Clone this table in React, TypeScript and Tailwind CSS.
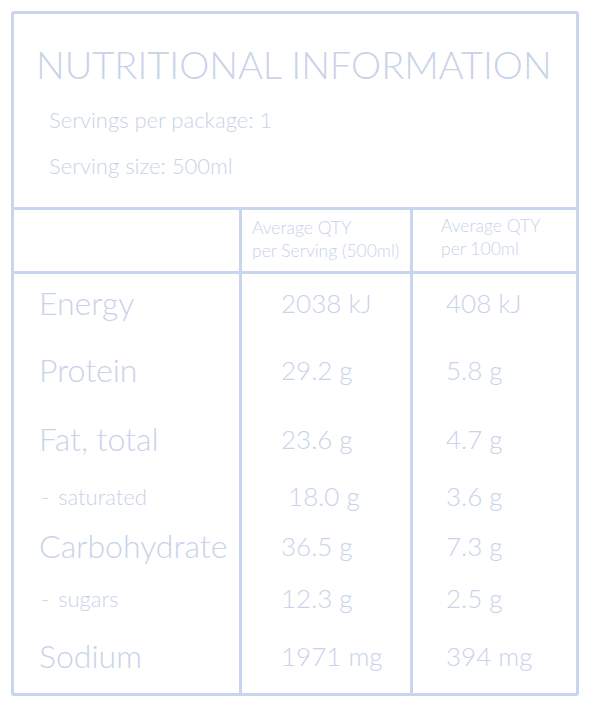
import React from "react";

const rows = [
  { label: "Energy", a: "2038 kJ", b: "408 kJ", h: "h-[58px]", sub: false },
  { label: "Protein", a: "29.2 g", b: "5.8 g", h: "h-[76px]", sub: false },
  { label: "Fat, total", a: "23.6 g", b: "4.7 g", h: "h-[62px]", sub: false },
  { label: "saturated", a: "\u00a018.0 g", b: "3.6 g", h: "h-[52px]", sub: true },
  { label: "Carbohydrate", a: "36.5 g", b: "7.3 g", h: "h-[42px]", sub: false },
  { label: "sugars", a: "12.3 g", b: "2.5 g", h: "h-[68px]", sub: true },
  { label: "Sodium", a: "1971 mg", b: "394 mg", h: "h-[36px]", sub: false },
];

export default function App() {
  return (
    <div
      className="w-[591px] h-[709px] bg-white pt-[11px] pl-[11px] text-[#c8d3e9]"
      style={{ fontFamily: "Lato, 'Noto Sans', sans-serif" }}
    >
      <div className="w-[568px] h-[685px] border-[3px] border-[#c7d5ee] rounded-[3px] flex flex-col">
        <div className="h-[196px] border-b-[3px] border-[#c7d5ee] flex flex-col">
          <div className="pl-[22px] pt-[28px] text-[38px] leading-[45px] font-light">
            NUTRITIONAL INFORMATION
          </div>
          <div className="pl-[35px] pt-[20px] text-[22px] leading-[26px] font-light">
            Servings per package: 1
          </div>
          <div className="pl-[35px] pt-[20px] text-[22px] leading-[26px] font-light">
            Serving size: 500ml
          </div>
        </div>
        <div className="grid grid-cols-[225px_171px_1fr] h-[64px] border-b-[3px] border-[#c7d5ee]">
          <div />
          <div className="border-l-[3px] border-[#c7d5ee] pl-[10px] pt-[6px] text-[17.5px] leading-[23px] font-light">
            Average QTY
            <br />
            per Serving (500ml)
          </div>
          <div className="border-l-[3px] border-[#c7d5ee] pl-[28px] pt-[4px] text-[17.5px] leading-[23px] font-light">
            Average QTY
            <br />
            per 100ml
          </div>
        </div>
        <div className="flex-1 flex flex-col">
          {rows.map((r) => (
            <div key={r.label} className={`grid grid-cols-[225px_171px_1fr] ${r.h}`}>
              <div className="flex items-center pl-[25px]">
                {r.sub ? (
                  <span className="text-[22px] font-light pl-[2px]">
                    -<span className="ml-[9px]">{r.label}</span>
                  </span>
                ) : (
                  <span className="text-[32px] font-light">{r.label}</span>
                )}
              </div>
              <div className="border-l-[3px] border-[#c7d5ee] flex items-center pl-[39px] text-[26px] font-light">
                {r.a}
              </div>
              <div className="border-l-[3px] border-[#c7d5ee] flex items-center pl-[33px] text-[26px] font-light">
                {r.b}
              </div>
            </div>
          ))}
          <div className="grid grid-cols-[225px_171px_1fr] flex-1">
            <div />
            <div className="border-l-[3px] border-[#c7d5ee]" />
            <div className="border-l-[3px] border-[#c7d5ee]" />
          </div>
        </div>
      </div>
    </div>
  );
}
